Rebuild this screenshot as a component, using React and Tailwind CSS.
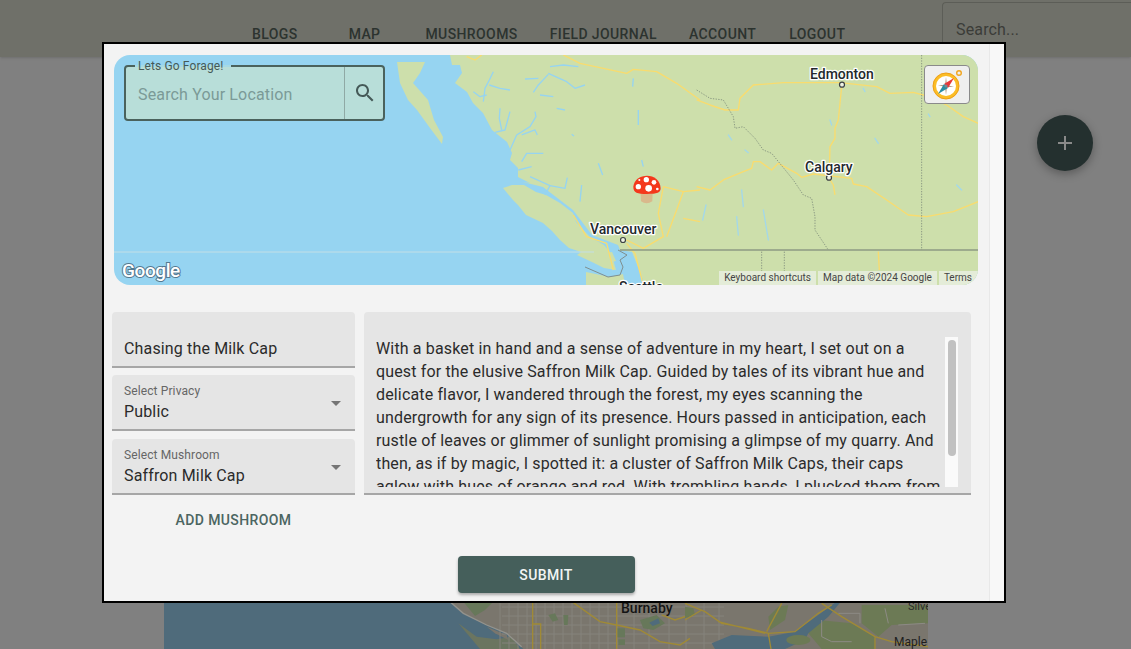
const NAV = [
  { label: "BLOGS", className: "ml-[252px]" },
  { label: "MAP", className: "ml-[51px]" },
  { label: "MUSHROOMS", className: "ml-[45px]" },
  { label: "FIELD JOURNAL", className: "ml-[32px]" },
  { label: "ACCOUNT", className: "ml-[32px]" },
  { label: "LOGOUT", className: "ml-[33px]" },
];

const STORY =
  "With a basket in hand and a sense of adventure in my heart, I set out on a quest for the elusive Saffron Milk Cap. Guided by tales of its vibrant hue and delicate flavor, I wandered through the forest, my eyes scanning the undergrowth for any sign of its presence. Hours passed in anticipation, each rustle of leaves or glimmer of sunlight promising a glimpse of my quarry. And then, as if by magic, I spotted it: a cluster of Saffron Milk Caps, their caps aglow with hues of orange and red. With trembling hands, I plucked them from the earth.";

const ROADS_MID = [
  "M490 45 L540 70 L680 100 L700 88 L770 95 L830 130 L900 180",
  "M790 440 L850 455 L900 450",
  "M790 440 L775 520 L790 590 L730 625 L680 600",
  "M850 455 L830 510 L800 590",
  "M850 535 L900 545",
  "M520 525 L560 590 L620 610 L640 690",
  "M680 610 L705 640 L730 735",
  "M200 50 L225 60 L245 45",
];

const ROADS_RIGHT = [
  "M-10 180 L30 195 L75 210 L115 210 L120 175 L160 135 L250 128 L420 128 L530 140 L570 160 L640 157 L670 165 L740 195 L790 230 L835 250",
  "M425 140 L415 240 L405 265 L405 295 L390 320 L388 400",
  "M-10 440 L30 450 L70 420 L130 395 L155 385 L160 365 L180 365 L215 390 L235 370 L290 400 L305 412 L340 402 L455 415 L460 432 L500 440 L560 480 L625 525 L680 530 L760 515 L835 485",
  "M388 415 L400 435 L405 465",
  "M535 635 L538 690",
];

// inlets along the coast, in the coordinates of the coast group
const FJORDS = [
  "M130 50 L118 75 L105 100 L100 140",
  "M110 120 L90 125 L70 110",
  "M118 90 L150 100 L180 105",
  "M150 160 L148 190 L155 225",
  "M180 170 L165 225 L135 232",
  "M255 170 L258 185 L240 215 L200 240 L180 285",
  "M215 240 L255 225 L262 240",
  "M215 320 L230 295 L280 295",
  "M205 345 L245 335",
  "M300 35 L340 30 L385 35",
  "M295 55 L350 80 L375 100 L405 90",
  "M250 112 L265 90 L295 58",
  "M225 72 L265 70",
  "M270 120 L310 125",
  "M320 160 L345 165",
  "M445 325 L458 360",
  "M365 238 L372 243",
  "M240 365 L300 392 L285 420",
  "M300 392 L345 400 L352 368",
  "M395 390 L390 440",
  "M550 70 L548 95",
  "M565 165 L565 210",
  "M575 315 L580 335",
];

const LAKES_RIGHT = [
  "M85 285 L95 300",
  "M135 330 L145 338",
  "M125 450 L130 500",
  "M18 495 L8 540",
  "M190 510 L205 600",
  "M110 530 L115 585",
  "M525 295 L535 310",
  "M770 435 L785 450",
  "M390 240 L395 255",
  "M490 145 L495 155",
  "M685 222 L690 230",
];

const BG_VERTICAL = [336, 345, 354, 363, 372, 381, 390, 399, 408, 417, 426, 435, 444, 453, 470, 485, 505, 522, 540, 555];
const BG_HORIZONTAL = [158, 167, 176, 185, 194];

const CityDot = ({ x, y }) => (
  <circle cx={x} cy={y} r="2.5" fill="#eef3e4" stroke="#3c4043" strokeWidth="1.2" />
);

const CityLabel = ({ x, y, children }) => (
  <text
    x={x}
    y={y}
    fontSize="14"
    fontWeight="500"
    fill="#23282c"
    stroke="#ffffff"
    strokeWidth="2.5"
    paintOrder="stroke"
    strokeLinejoin="round"
  >
    {children}
  </text>
);

const RegionMap = () => (
  <svg viewBox="0 0 864 230" className="block w-[864px] h-[230px]">
    <rect width="864" height="230" fill="#96d4f1" />
    {/* mainland, vancouver island, olympic peninsula, haida gwaii */}
    <g fill="#cddfab">
      <path d="M336 0 L338 10 L346 10 L348 18 L341 28 L353 37 L359 48 L369 58 L378 75 L393 87 L398 98 L396 105 L404 113 L404 122 L416 128 L409 127 L429 132 L459 155 L478 180 L504 190 L506 195 L518 197 L524 212 L531 230 L864 230 L864 0 Z" />
      <path d="M389 133 L398 130 L410 130 L422 137 L432 140 L446 148 L459 158 L462 167 L476 182 L490 190 L498 200 L500 208 L502 215 L490 213 L480 208 L463 200 L467 197 L455 193 L446 185 L438 176 L429 168 L412 160 L404 150 L399 145 Z" />
      <path d="M472 217 L496 222 L509 219 L511 230 L472 230 Z" />
      <path d="M490 198 L498 197 L502 206 L494 208 Z" />
      <path d="M283 7 L311 7 L306 18 L299 28 L314 45 L320 65 L329 82 L328 89 L316 73 L303 55 L294 45 L286 28 Z" />
    </g>
    <g
      transform="translate(336 0) scale(0.3333)"
      fill="none"
      stroke="#96d4f1"
      strokeWidth="4"
      strokeLinejoin="round"
    >
      {FJORDS.map((d) => (
        <path key={d} d={d} />
      ))}
    </g>
    <path
      fill="none"
      stroke="#7f8f8f"
      strokeWidth="1"
      d="M504 195 L513 200 L506 205 L509 212 L506 220 L494 222 L471 212"
    />
    <g transform="translate(286 -15) scale(0.3333)" fill="none" stroke="#f9dc6e" strokeWidth="4" strokeLinejoin="round">
      {ROADS_MID.map((d) => (
        <path key={d} d={d} />
      ))}
    </g>
    <path d="M0 197 H480" stroke="#c3dfe6" strokeWidth="1" />
    <path d="M506 195 H864" stroke="#8c9a83" strokeWidth="1.3" />
    <g transform="translate(586 -15) scale(0.3333)">
      <g fill="none" stroke="#a3d8ea" strokeWidth="4" strokeLinecap="round">
        {LAKES_RIGHT.map((d) => (
          <path key={d} d={d} />
        ))}
      </g>
      <g fill="none" stroke="#f9dc6e" strokeWidth="4" strokeLinejoin="round">
        {ROADS_RIGHT.map((d) => (
          <path key={d} d={d} />
        ))}
      </g>
      <g fill="none" stroke="#8c9a83" strokeWidth="3" strokeDasharray="4 4">
        <path d="M-10 150 L30 175 L70 180 L100 230 L105 265 L130 260 L165 295 L190 330 L215 340 L280 420 L310 465 L335 475 L345 530 L345 570 L385 630" />
        <path d="M665 45 V630" />
        <path d="M185 635 V735" />
        <path d="M253 635 V735" />
      </g>
    </g>
    <CityDot x={728} y={29.7} />
    <CityDot x={715} y={122.7} />
    <CityDot x={509} y={185} />
    <CityLabel x={696} y={24}>Edmonton</CityLabel>
    <CityLabel x={691} y={117}>Calgary</CityLabel>
    <CityLabel x={476} y={179}>Vancouver</CityLabel>
    <CityLabel x={505} y={237}>Seattle</CityLabel>
    {/* mushroom marker */}
    <g transform="translate(286 -15) scale(0.3333)">
      <path d="M722 460 H758 L757 484 Q740 496 723 484 Z" fill="#d9b98c" />
      <path
        d="M700 440 C702 418 722 407 741 407 C762 407 781 420 782 445 C782 458 772 462 741 462 C712 462 700 458 700 440 Z"
        fill="#f4381c"
      />
      <g fill="#ffffff">
        <circle cx="746" cy="445" r="10" />
        <circle cx="715" cy="440" r="8" />
        <circle cx="739" cy="419" r="8" />
        <circle cx="762" cy="427" r="7" />
        <circle cx="772" cy="447" r="4" />
        <circle cx="718" cy="420" r="3" />
      </g>
    </g>
    <text
      x="8"
      y="222"
      fontSize="19"
      fontWeight="500"
      fill="#ffffff"
      stroke="#54788f"
      strokeWidth="2"
      paintOrder="stroke"
      letterSpacing="-0.4"
    >
      Google
    </text>
  </svg>
);

const CompassIcon = () => (
  <svg viewBox="0 0 36 36" className="w-[36px] h-[36px]">
    <circle cx="30" cy="6" r="2.3" fill="none" stroke="#f2a51e" strokeWidth="1.4" />
    <circle cx="17" cy="19" r="13" fill="#fbbd26" stroke="#ee9f15" strokeWidth="1" />
    <circle cx="17" cy="19" r="10" fill="#ffffff" />
    <path d="M17 10 L18 18 L25 20 L18 20 L17 28 L16 20 L9 18 L16 18 Z" fill="#b79c84" />
    <path d="M25 11 L19 21 L15 17 Z" fill="#e8383a" />
    <path d="M9 27 L15 17 L19 21 Z" fill="#2a8ca3" />
    <circle cx="17" cy="19" r="1.6" fill="#7a8a90" />
  </svg>
);

const MapPanel = () => (
  <div className="relative h-[230px] w-[864px] overflow-hidden rounded-2xl">
    <RegionMap />

    {/* location search */}
    <div className="absolute left-[10px] top-[10px] flex h-[56px] w-[261px] rounded border-2 border-[#4a625d] bg-[#b8ded9]">
      <span className="absolute -top-[2px] left-[9px] h-[2px] w-[96px] bg-[#a5d9e5]" />
      <span className="absolute -top-[8px] left-[12px] text-xs leading-[14px] tracking-[0.00938em] text-[#455a58]">
        Lets Go Forage!
      </span>
      <div className="flex flex-1 items-center pl-3 pt-[3px] text-base tracking-[0.00938em] text-[#7b9a97]">
        Search Your Location
      </div>
      <div className="flex w-[39px] items-center justify-center border-l border-[#8fa9a5] pl-[1px]">
        <svg viewBox="0 0 24 24" className="h-6 w-6" fill="#455a58">
          <path d="M15.5 14h-.79l-.28-.27C15.41 12.59 16 11.11 16 9.5 16 5.91 13.09 3 9.5 3S3 5.91 3 9.5 5.91 16 9.5 16c1.61 0 3.09-.59 4.23-1.57l.27.28v.79l5 4.99L20.49 19l-4.99-5zm-6 0C7.01 14 5 11.99 5 9.5S7.01 5 9.5 5 14 7.01 14 9.5 11.99 14 9.5 14z" />
        </svg>
      </div>
    </div>

    {/* locate button */}
    <button className="absolute right-[8px] top-[10px] flex h-[39px] w-[46px] items-center justify-center rounded-sm border border-[#8a8a8a] bg-[#efefef]">
      <CompassIcon />
    </button>

    {/* attribution */}
    <div className="absolute bottom-0 right-0 flex h-[14px] items-center gap-[2px] text-[10px] leading-[14px] text-[#444444]">
      <span className="bg-[#e4ecd8] px-[5px]">Keyboard shortcuts</span>
      <span className="bg-[#e4ecd8] px-[5px]">Map data ©2024 Google</span>
      <span className="bg-[#e4ecd8] pl-[5px] pr-[6px]">Terms</span>
    </div>
  </div>
);

const SelectField = ({ label, value, className }) => (
  <div
    className={`relative h-[56px] rounded-t border-b-2 border-[#a6a6a6] bg-[#e5e5e5] pl-3 pt-[9px] ${className}`}
  >
    <div className="text-xs leading-[14px] tracking-[0.00938em] text-[#666666]">{label}</div>
    <div className="mt-[2px] text-base leading-[23px] tracking-[0.00938em] text-[#2b2b2b]">
      {value}
    </div>
    <svg viewBox="0 0 24 24" className="absolute right-[7px] top-[16px] h-6 w-6" fill="#757575">
      <path d="M7 10l5 5 5-5z" />
    </svg>
  </div>
);

const BackgroundMap = () => (
  <div className="ml-[164px] mt-auto h-[200px] w-[764px] overflow-hidden">
    <svg viewBox="0 0 764 200" className="block h-[200px] w-[764px]">
      <rect width="764" height="200" fill="#4f6b7b" />
      {/* land, left half */}
      <g transform="translate(276 151) scale(0.3333)">
        <path d="M30 5 L70 40 L140 75 L200 100 L250 147 L1500 147 L1500 5 Z" fill="#7a766d" />
        <path d="M70 5 L160 5 L135 30 L105 48 Z" fill="#67785a" />
        <path d="M55 70 L110 110 L170 118 L215 110 L240 147 L120 147 Z" fill="#6b7560" />
        <path d="M140 80 L200 105 L205 120 L165 100 Z" fill="#7a766d" />
      </g>
      <g stroke="#85837c" strokeWidth="1" fill="none">
        {BG_VERTICAL.map((x) => (
          <path key={x} d={`M${x} 150 V200`} />
        ))}
        {BG_HORIZONTAL.map((y) => (
          <path key={y} d={`M338 ${y} H560`} />
        ))}
      </g>
      <g transform="translate(276 151) scale(0.3333)">
        <path d="M30 5 L70 40 L140 75 L200 100 L245 140" fill="none" stroke="#94938d" strokeWidth="4" />
        <path d="M325 45 L345 40 L355 60 L338 65 Z" fill="#67785a" />
        <path d="M370 45 L385 45 L383 75 L372 75 Z" fill="#67785a" />
        <path d="M532 85 L555 85 L555 112 L532 112 Z" fill="#67785a" />
        <path d="M535 118 L555 118 L555 135 L535 135 Z" fill="#67785a" />
        <path d="M600 60 L650 45 L675 70 L640 90 L610 85 Z" fill="#67785a" />
        <path d="M628 68 L655 55 L660 70 L638 78 Z" fill="#4f6b7b" />
        <path
          d="M278 0 V147 M278 72 H302 V147 M400 8 L480 65 L530 75 L600 90 L660 125 L720 135 L750 115 M530 0 V147 M665 45 L705 60 L750 45"
          fill="none"
          stroke="#a08a35"
          strokeWidth="4"
        />
      </g>
      {/* river and right half */}
      <g transform="translate(521 151) scale(0.3333)">
        <path d="M370 100 L400 60 L500 70 L570 110 L570 147 L410 147 Z" fill="#6c7a55" />
        <path d="M250 50 L280 20 L310 15 L300 60 L255 90 Z" fill="#6c7a55" />
        <path d="M530 15 L729 15 L729 70 L620 75 L580 110 L530 70 Z" fill="#6c7a55" />
        <path d="M0 20 L25 25 L30 45 L0 55 Z" fill="#6c7a55" />
        <path
          d="M80 130 L140 105 L250 110 L330 95 L400 45 L450 8 L465 8 L430 50 L370 100 L360 120 L300 147 L90 147 Z"
          fill="#4f6b7b"
        />
        <ellipse cx="340" cy="120" rx="36" ry="15" fill="#6c7a55" />
        <path
          d="M410 60 V110 L440 125 H500 M460 40 H525 V70 M640 75 L720 70 M600 25 L610 70"
          fill="none"
          stroke="#8d8b85"
          strokeWidth="3"
        />
        <path
          d="M0 10 L60 35 L110 70 L190 85 L250 100 L258 147 M0 60 L50 30 M100 65 L240 100 M250 100 L330 95 L400 40 L440 15 M410 10 L470 50 L570 110 L620 125 L729 140 M570 110 V147 M290 10 L245 95"
          fill="none"
          stroke="#a08a35"
          strokeWidth="4"
        />
      </g>
      <g fontSize="14" fontWeight="500" fill="#141414">
        <text x="457" y="164">Burnaby</text>
        <text x="744" y="161" fontSize="11" fontWeight="400" fill="#2b2b2b">Silver</text>
        <text x="730" y="197" fontSize="12" fontWeight="400" fill="#1e1e1e">Maple</text>
      </g>
    </svg>
  </div>
);

export default function App() {
  return (
    <div className="relative flex h-[649px] w-[1131px] flex-col overflow-hidden bg-[#808080] font-['Roboto',sans-serif]">
      {/* page header */}
      <header className="relative flex h-[57px] shrink-0 bg-[#6f7069] shadow-sm">
        <nav className="flex items-start pt-[26px]">
          {NAV.map((item) => (
            <a
              key={item.label}
              className={`text-sm font-medium leading-4 tracking-[0.02857em] text-[#2c332f] ${item.className}`}
            >
              {item.label}
            </a>
          ))}
        </nav>
        <div className="ml-auto mt-[2px] flex h-[55px] w-[189px] items-center rounded-tl border-l border-t border-[#5c5d57] pl-[13px] text-base tracking-[0.00938em] text-[#3b3c38]">
          Search...
        </div>
      </header>

      <BackgroundMap />

      {/* add button */}
      <button className="absolute left-[1037px] top-[115px] flex h-14 w-14 items-center justify-center rounded-full bg-[#24302f] shadow-[0_3px_10px_rgba(0,0,0,0.3)]">
        <svg viewBox="0 0 24 24" className="h-6 w-6" fill="#8a8a8a">
          <path d="M19 13h-6v6h-2v-6H5v-2h6V5h2v6h6v2z" />
        </svg>
      </button>

      {/* modal */}
      <div className="absolute left-[102px] top-[42px] flex h-[561px] w-[904px] border-2 border-black bg-[#f3f3f3]">
        <div className="w-[885px] overflow-hidden">
          <div className="ml-[10px] mt-[11px]">
            <MapPanel />
          </div>

          <div className="ml-2 mt-[27px] flex items-start gap-[9px]">
            <div className="w-[243px]">
              <div className="flex h-[56px] items-end rounded-t border-b-2 border-[#a6a6a6] bg-[#e5e5e5] pb-[6px] pl-3 text-base leading-[23px] tracking-[0.00938em] text-[#2b2b2b]">
                Chasing the Milk Cap
              </div>
              <SelectField label="Select Privacy" value="Public" className="mt-[7px]" />
              <SelectField label="Select Mushroom" value="Saffron Milk Cap" className="mt-2" />
              <button className="mt-[7px] h-9 w-full text-sm font-medium tracking-[0.02857em] text-[#4b6561]">
                ADD MUSHROOM
              </button>
            </div>

            <div className="flex h-[183px] w-[607px] rounded-t border-b-2 border-[#a6a6a6] bg-[#e5e5e5] pl-3 pr-[13px] pt-[25px]">
              <div className="h-[150px] flex-1 overflow-hidden text-base leading-[23px] tracking-[0.00938em] text-[#2b2b2b]">
                {STORY}
              </div>
              <div className="h-[150px] w-[13px] shrink-0 bg-[#fafafa] px-[3px] pt-[3px]">
                <div className="h-[116px] w-2 rounded bg-[#c1c1c1]" />
              </div>
            </div>
          </div>

          <div className="mt-[18px] flex justify-center pr-[1px]">
            <button className="h-[37px] w-[177px] rounded bg-[#455f5b] text-sm font-medium tracking-[0.02857em] text-[#f2f5f4] shadow-[0_2px_3px_rgba(0,0,0,0.3)]">
              SUBMIT
            </button>
          </div>
        </div>
        <div className="w-[15px] border-l border-[#e8e8e8] bg-[#f8f8f8]" />
      </div>
    </div>
  );
}
